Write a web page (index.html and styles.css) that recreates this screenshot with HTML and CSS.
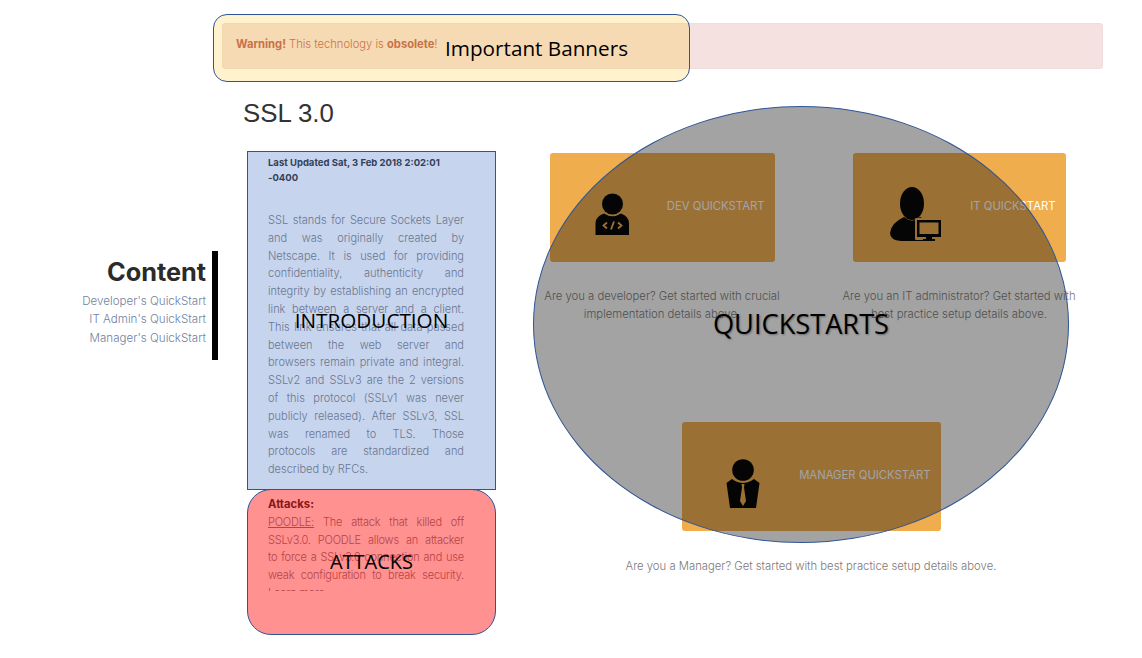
FILE: index.html
```html
<!DOCTYPE html>
<html>

<head>
    <title>SSL 3.0</title>
    <link rel="stylesheet" href="styles.css">
</head>

<body>
    <div class="page">
        <aside class="sidebar">
            <h2>Content</h2>
            <a href="#dev">Developer's QuickStart</a>
            <a href="#it">IT Admin's QuickStart</a>
            <a href="#manager">Manager's QuickStart</a>
        </aside>

        <main class="content">
            <div class="banner"><b>Warning!</b> This technology is <b>obsolete</b>!</div>
            <h1>SSL 3.0</h1>

            <div class="columns">
                <div class="text-col">
                    <section class="intro">
                        <p class="updated">Last Updated Sat, 3 Feb 2018 2:02:01 -0400</p>
                        <p>SSL stands for Secure Sockets Layer and was originally created by Netscape. It is used for providing confidentiality, authenticity and integrity by establishing an encrypted link between a server and a client. This link ensures that all data passed between the web server and browsers remain private and integral. SSLv2 and SSLv3 are the 2 versions of this protocol (SSLv1 was never publicly released). After SSLv3, SSL was renamed to TLS. Those protocols&nbsp;are&nbsp;standardized and described by RFCs.</p>
                    </section>
                    <section class="attacks">
                        <h3>Attacks:</h3>
                        <p><u>POODLE:</u> The attack that killed off SSLv3.0. POODLE allows an attacker to&nbsp;force a SSLv3.0 connection and use weak configuration to break security. Learn more</p>
                    </section>
                </div>

                <div class="quickstarts">
                    <div class="qs-row">
                        <div class="qs-item" id="dev">
                            <a class="qs-card qs-dev" href="#dev">
                                <svg class="qs-icon" width="34" height="42" viewBox="0 0 34 42">
                                    <circle cx="17.5" cy="11" r="10.5" />
                                    <path d="M0.5 42 V30 Q0.5 23.500 9 20.500 Q17.500 26 26 20.500 Q34 23.500 34 30 V42 Z" />
                                    <path class="cut" d="M12 29.500 L8.500 32.500 L12 35.500 M23 29.500 L26.500 32.500 L23 35.500 M19 28.500 L16 36.500" />
                                </svg>
                                <span>DEV QUICKSTART</span>
                            </a>
                            <p>Are you a developer? Get started with crucial implementation details above.</p>
                        </div>
                        <div class="qs-item" id="it">
                            <a class="qs-card qs-it" href="#it">
                                <svg class="qs-icon" width="51" height="54" viewBox="0 0 51 54">
                                    <ellipse cx="22" cy="16.500" rx="12" ry="16.500" />
                                    <path d="M14 30 Q22 37 30 30 L36 33 L36 54 H11 Q0 53 0 46 Q1 36 14 30 Z" />
                                    <rect class="halo" x="25" y="31" width="26" height="22" rx="1" />
                                    <rect x="27" y="33" width="24" height="17" />
                                    <rect class="screen" x="29.500" y="35.500" width="19" height="11.500" />
                                    <path d="M36 50 H42 V52 H45 V54 H33 V52 H36 Z" />
                                </svg>
                                <span>IT QUICKSTART</span>
                            </a>
                            <p>Are you an IT administrator? Get started with best practice setup details above.</p>
                        </div>
                    </div>
                    <div class="qs-item qs-wide" id="manager">
                        <a class="qs-card qs-manager" href="#manager">
                            <svg class="qs-icon" width="34" height="49" viewBox="0 0 34 49">
                                <circle cx="17" cy="11" r="10.800" />
                                <path d="M0.500 24 L6 20 Q17 28 28 20 L33.500 24 L30 49 H4 Z" />
                                <path class="cut-fill" d="M15.500 25 H18.500 L18 28.500 L20 42 L17 47 L14 42 L16 28.500 Z" />
                            </svg>
                            <span>MANAGER QUICKSTART</span>
                        </a>
                        <p>Are you a Manager? Get started with best practice setup details above.</p>
                    </div>
                </div>
            </div>
        </main>

        <!-- annotation shapes drawn over the page -->
        <div class="note note-banners"><span>Important Banners</span></div>
        <div class="note note-intro"><span>INTRODUCTION</span></div>
        <div class="note note-attacks"><span>ATTACKS</span></div>
        <div class="note note-quick"><span>QUICKSTARTS</span></div>
    </div>
</body>

</html>
```

FILE: styles.css
```css
body {
    margin: 0;
    background: #ffffff;
    color: #7a7a7a;
    font-family: Inter, Arial, sans-serif;
    font-size: 11.300px;
    font-weight: 300;
}

.page {
    position: relative;
    display: flex;
    height: 658px;
    overflow: hidden;
}

/* Left nav */
.sidebar {
    box-sizing: border-box;
    width: 218px;
    height: 109px;
    margin-top: 251px;
    padding: 6px 6px 0 0;
    border-right: 6px solid #000000;
    text-align: right;
}

.sidebar h2 {
    margin: 0 0 5px;
    color: #2b2b2b;
    font-size: 25.300px;
    line-height: 30px;
    font-weight: 700;
}

.sidebar a {
    display: block;
    color: #71829f;
    font-size: 11.600px;
    line-height: 18.400px;
    text-decoration: none;
}

/* Main */
.content {
    flex: 1;
    padding: 23px 39px 0 4px;
}

.banner {
    box-sizing: border-box;
    height: 46px;
    padding: 13px 13px 0;
    border: 1px solid #efdcdc;
    border-radius: 3px;
    background: #f4e1e0;
    color: #b9605c;
    font-size: 11.200px;
    line-height: 15px;
}

.banner b {
    font-weight: 700;
}

h1 {
    margin: 29px 0 0 21px;
    color: #333333;
    font-family: "Liberation Sans", Arial, sans-serif;
    font-size: 25.800px;
    line-height: 30px;
    font-weight: 400;
}

.columns {
    display: flex;
    margin-left: 25px;
    margin-top: 23px;
}

.text-col {
    box-sizing: border-box;
    width: 249px;
    padding: 4px 32px 0 21px;
    font-size: 11px;
    line-height: 17.800px;
    text-align: justify;
}

.text-col p {
    margin: 0;
}

.intro {
    height: 341px;
}

.intro .updated {
    margin-bottom: 27px;
    color: #2b2b2b;
    font-size: 9.500px;
    line-height: 15px;
    font-weight: 700;
    text-align: left;
}

.attacks {
    height: 95px;
    overflow: hidden;
    letter-spacing: -0.200px;
}

.attacks h3 {
    margin: 0;
    color: #2b2b2b;
    font-size: 11.300px;
    line-height: 17.800px;
    font-weight: 700;
    letter-spacing: 0;
}

/* Quickstart cards */
.quickstarts {
    margin: 2px 0 0 41px;
}

.qs-row {
    display: flex;
    gap: 47px;
}

.qs-item {
    display: flex;
    flex-direction: column;
    align-items: center;
    width: 250px;
}

.qs-item p {
    margin: 25px 0 0;
    line-height: 18px;
    text-align: center;
}

.qs-wide {
    width: 380px;
    margin: 99px 0 0 84px;
}

.qs-wide p {
    margin-top: 26px;
    white-space: nowrap;
}

.qs-card {
    display: flex;
    align-items: center;
    justify-content: space-between;
    box-sizing: border-box;
    height: 109px;
    padding-right: 10px;
    border-radius: 3px;
    background: #f0ad4e;
    color: #ffffff;
    font-size: 11.300px;
    font-weight: 400;
    text-decoration: none;
}

.qs-card span {
    margin-bottom: 3px;
}

.qs-icon {
    margin-top: 13px;
    fill: #000000;
}

.qs-dev {
    width: 225px;
    padding-left: 45px;
}

.qs-it {
    width: 213px;
    padding-left: 37px;
}

.qs-manager {
    width: 259px;
    padding-left: 44px;
}

.cut {
    fill: none;
    stroke: #f0ad4e;
    stroke-width: 1.800;
}

.cut-fill,
.halo,
.screen {
    fill: #f0ad4e;
}

/* Annotations */
.note {
    position: absolute;
    box-sizing: border-box;
    display: flex;
    align-items: center;
    justify-content: center;
    border: 1px solid #2f5597;
    color: #000000;
    font-family: "Open Sans", Arial, sans-serif;
    font-weight: 400;
}

.note-banners {
    left: 213px;
    top: 14px;
    width: 477px;
    height: 68px;
    padding-right: 61px;
    justify-content: flex-end;
    border-radius: 14px;
    background: rgba(255, 192, 0, 0.2);
    font-size: 20.700px;
}

.note-intro {
    left: 247px;
    top: 151px;
    width: 249px;
    height: 339px;
    padding-bottom: 2px;
    background: rgba(68, 114, 196, 0.3);
    font-size: 20.700px;
}

.note-attacks {
    left: 247px;
    top: 489px;
    width: 249px;
    height: 146px;
    padding-bottom: 2px;
    border-radius: 24px;
    background: rgba(255, 0, 0, 0.43);
    font-size: 20px;
}

.note-quick {
    left: 533px;
    top: 106px;
    width: 536px;
    height: 437px;
    padding-bottom: 3px;
    border-radius: 50%;
    background: rgba(13, 13, 13, 0.38);
    font-size: 27.200px;
    text-shadow: 1px 1px 2px rgba(0, 0, 0, 0.35);
}
```
